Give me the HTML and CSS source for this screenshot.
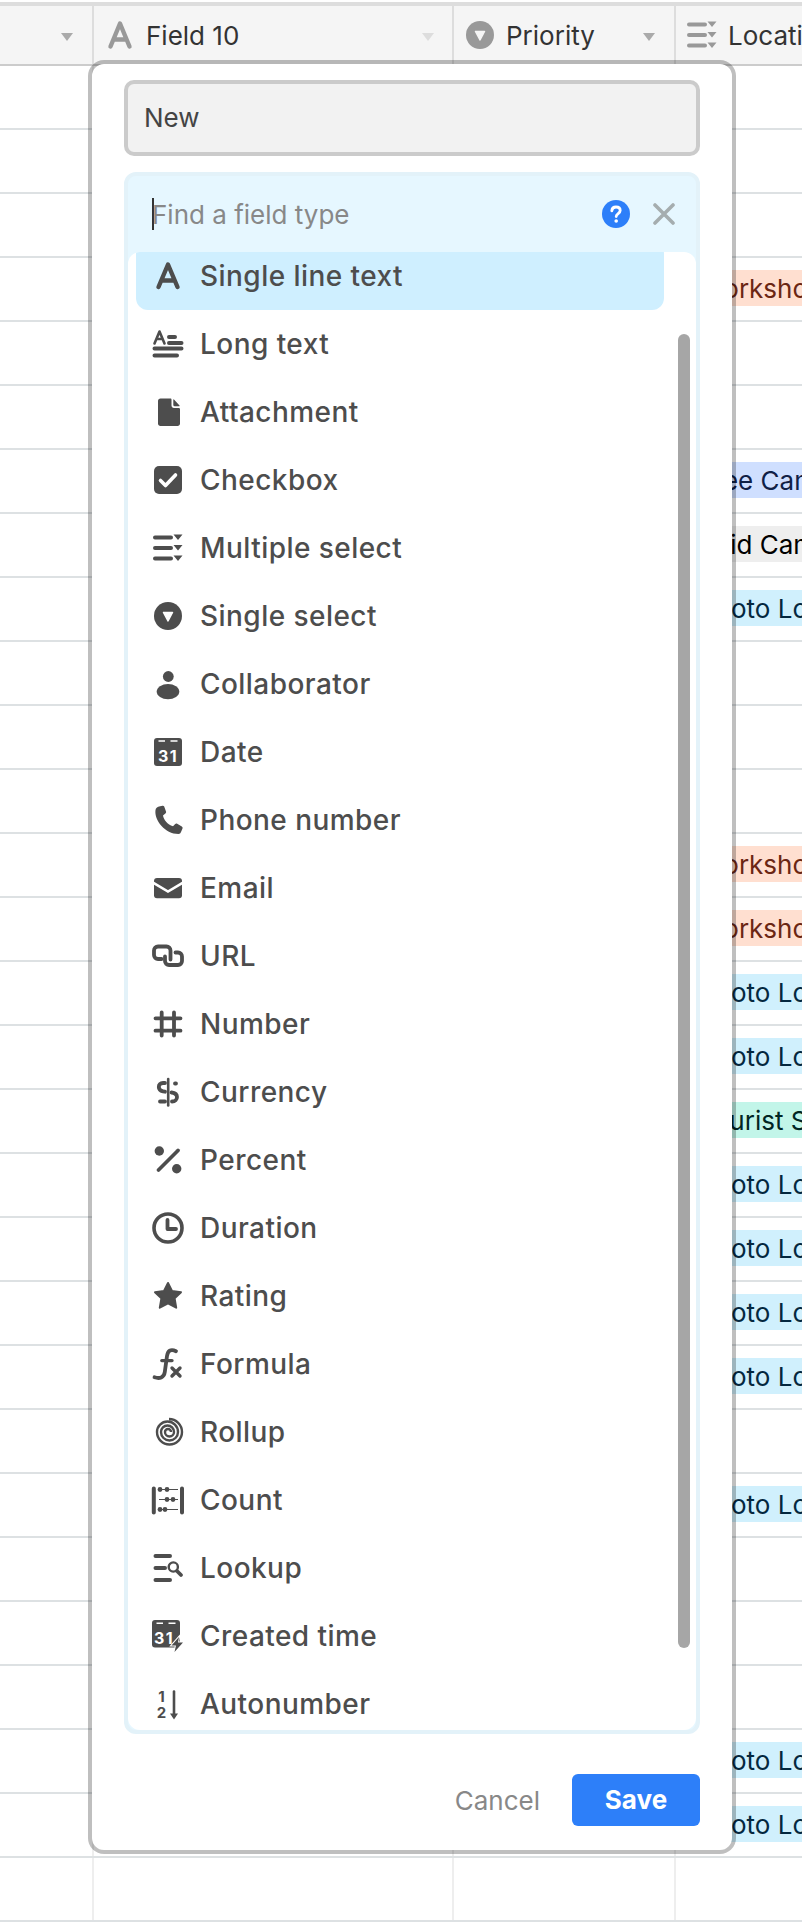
FILE: index.html
```html
<!DOCTYPE html>
<html lang="en">
<head>
<meta charset="utf-8">
<title>Field type picker</title>
<link rel="stylesheet" href="styles.css">
</head>
<body>
<div class="grid">
  <div class="head">
    <div class="hcell c0"><svg class="harrow" viewBox="0 0 14 10"><path d="M1 1H13L7 9Z" fill="#aaa"/></svg></div>
    <div class="hcell c1">
      <svg class="hico" viewBox="0 0 32 32"><path class="thick" d="M6.5 27.5 16 4.5 25.5 27.5M10 20.5H22"/></svg>
      <span class="hlabel">Field 10</span>
      <svg class="harrow" viewBox="0 0 14 10"><path d="M1 1H13L7 9Z" fill="#ddd"/></svg>
    </div>
    <div class="hcell c2">
      <svg class="hico" viewBox="0 0 32 32"><circle cx="16" cy="16" r="14" fill="#999"/><path d="M11.5 12.5H20.5L16 21Z" fill="#f5f5f5" stroke="#f5f5f5" stroke-width="1.5" stroke-linejoin="round"/></svg>
      <span class="hlabel">Priority</span>
      <svg class="harrow" viewBox="0 0 14 10"><path d="M1 1H13L7 9Z" fill="#aaa"/></svg>
    </div>
    <div class="hcell c3">
      <svg class="hico" viewBox="0 0 32 32"><path class="bars" d="M3 5.5H19M3 16H19M3 26.5H19"/><path class="solid" d="M21.5 2.5H30.5L26 8ZM21.5 13H30.5L26 18.5ZM21.5 23.5H30.5L26 29Z"/></svg>
      <span class="hlabel">Location</span>
    </div>
  </div>
  <div class="row"><div class="cell c0"></div><div class="cell c1"></div><div class="cell c2"></div><div class="cell c3"></div></div>
  <div class="row"><div class="cell c0"></div><div class="cell c1"></div><div class="cell c2"></div><div class="cell c3"></div></div>
  <div class="row"><div class="cell c0"></div><div class="cell c1"></div><div class="cell c2"></div><div class="cell c3"></div></div>
  <div class="row"><div class="cell c0"></div><div class="cell c1"></div><div class="cell c2"></div><div class="cell c3"><span class="tag shop">Workshop</span></div></div>
  <div class="row"><div class="cell c0"></div><div class="cell c1"></div><div class="cell c2"></div><div class="cell c3"></div></div>
  <div class="row"><div class="cell c0"></div><div class="cell c1"></div><div class="cell c2"></div><div class="cell c3"></div></div>
  <div class="row"><div class="cell c0"></div><div class="cell c1"></div><div class="cell c2"></div><div class="cell c3"><span class="tag free">Free Campsite</span></div></div>
  <div class="row"><div class="cell c0"></div><div class="cell c1"></div><div class="cell c2"></div><div class="cell c3"><span class="tag paid">Paid Campsite</span></div></div>
  <div class="row"><div class="cell c0"></div><div class="cell c1"></div><div class="cell c2"></div><div class="cell c3"><span class="tag photo">Photo Location</span></div></div>
  <div class="row"><div class="cell c0"></div><div class="cell c1"></div><div class="cell c2"></div><div class="cell c3"></div></div>
  <div class="row"><div class="cell c0"></div><div class="cell c1"></div><div class="cell c2"></div><div class="cell c3"></div></div>
  <div class="row"><div class="cell c0"></div><div class="cell c1"></div><div class="cell c2"></div><div class="cell c3"></div></div>
  <div class="row"><div class="cell c0"></div><div class="cell c1"></div><div class="cell c2"></div><div class="cell c3"><span class="tag shop">Workshop</span></div></div>
  <div class="row"><div class="cell c0"></div><div class="cell c1"></div><div class="cell c2"></div><div class="cell c3"><span class="tag shop">Workshop</span></div></div>
  <div class="row"><div class="cell c0"></div><div class="cell c1"></div><div class="cell c2"></div><div class="cell c3"><span class="tag photo">Photo Location</span></div></div>
  <div class="row"><div class="cell c0"></div><div class="cell c1"></div><div class="cell c2"></div><div class="cell c3"><span class="tag photo">Photo Location</span></div></div>
  <div class="row"><div class="cell c0"></div><div class="cell c1"></div><div class="cell c2"></div><div class="cell c3"><span class="tag tour">Tourist Spot</span></div></div>
  <div class="row"><div class="cell c0"></div><div class="cell c1"></div><div class="cell c2"></div><div class="cell c3"><span class="tag photo">Photo Location</span></div></div>
  <div class="row"><div class="cell c0"></div><div class="cell c1"></div><div class="cell c2"></div><div class="cell c3"><span class="tag photo">Photo Location</span></div></div>
  <div class="row"><div class="cell c0"></div><div class="cell c1"></div><div class="cell c2"></div><div class="cell c3"><span class="tag photo">Photo Location</span></div></div>
  <div class="row"><div class="cell c0"></div><div class="cell c1"></div><div class="cell c2"></div><div class="cell c3"><span class="tag photo">Photo Location</span></div></div>
  <div class="row"><div class="cell c0"></div><div class="cell c1"></div><div class="cell c2"></div><div class="cell c3"></div></div>
  <div class="row"><div class="cell c0"></div><div class="cell c1"></div><div class="cell c2"></div><div class="cell c3"><span class="tag photo">Photo Location</span></div></div>
  <div class="row"><div class="cell c0"></div><div class="cell c1"></div><div class="cell c2"></div><div class="cell c3"></div></div>
  <div class="row"><div class="cell c0"></div><div class="cell c1"></div><div class="cell c2"></div><div class="cell c3"></div></div>
  <div class="row"><div class="cell c0"></div><div class="cell c1"></div><div class="cell c2"></div><div class="cell c3"></div></div>
  <div class="row"><div class="cell c0"></div><div class="cell c1"></div><div class="cell c2"></div><div class="cell c3"><span class="tag photo">Photo Location</span></div></div>
  <div class="row"><div class="cell c0"></div><div class="cell c1"></div><div class="cell c2"></div><div class="cell c3"><span class="tag photo">Photo Location</span></div></div>
  <div class="row"><div class="cell c0"></div><div class="cell c1"></div><div class="cell c2"></div><div class="cell c3"></div></div>
</div>

<div class="modal">
  <div class="name">New</div>
  <div class="picker">
    <div class="search">
      <span class="caret"></span>
      <span class="placeholder">Find a field type</span>
      <svg class="help" viewBox="0 0 28 28"><circle cx="14" cy="14" r="14" fill="#2d7ff9"/><path d="M9.8 10.8C10 8.2 11.8 7 14 7C16.4 7 18.2 8.4 18.2 10.6C18.2 13.6 14.2 13.6 14.2 16.6" fill="none" stroke="#fff" stroke-width="2.8" stroke-linecap="round"/><circle cx="14.2" cy="21" r="1.8" fill="#fff"/></svg>
      <svg class="close" viewBox="0 0 22 22"><path d="M2 2 20 20M20 2 2 20" fill="none" stroke="#a5adaf" stroke-width="3.6" stroke-linecap="round"/></svg>
    </div>
    <div class="list">
      <div class="items">
        <div class="item active"><svg class="ico" viewBox="0 0 32 32"><path class="thick" d="M6.5 27 16 4.5 25.5 27M10 20.5H22"/></svg><span>Single line text</span></div>
        <div class="item"><svg class="ico" viewBox="0 0 32 32"><path class="thin" d="M2.5 15.5 7.5 3.5 12.5 15.5M4.5 11H10.5"/><path class="bars" d="M17 9H23M17 15H29.5M2.5 20.5H29.5M2.5 27.5H25"/></svg><span>Long text</span></div>
        <div class="item"><svg class="ico" viewBox="0 0 32 32"><path class="solid" d="M8.5 2.5H18.5C19.2 2.5 19.5 3 19.5 3.8V9.5C19.5 11 20.5 12 22 12H26.5C27.4 12 28 12.4 28 13.2V27.5C28 29 27 30 25.5 30H8.5C7 30 6 29 6 27.5V5C6 3.5 7 2.5 8.5 2.5ZM22 3.5 27.5 9.5C27.8 10 27.5 10.3 27 10.3H22.5C21.8 10.3 21.3 9.8 21.3 9.1V4C21.3 3.3 21.7 3.2 22 3.5Z"/></svg><span>Attachment</span></div>
        <div class="item"><svg class="ico" viewBox="0 0 32 32"><rect x="2" y="2" width="28" height="28" rx="5" class="solid"/><path class="cut" d="M8.5 16.5 13.5 21.5 23.5 11"/></svg><span>Checkbox</span></div>
        <div class="item"><svg class="ico" viewBox="0 0 32 32"><path class="bars" d="M3 5.5H19M3 16H19M3 26.5H19"/><path class="solid" d="M21.5 2.5H30.5L26 8ZM21.5 13H30.5L26 18.5ZM21.5 23.5H30.5L26 29Z"/></svg><span>Multiple select</span></div>
        <div class="item"><svg class="ico" viewBox="0 0 32 32"><circle cx="16" cy="16" r="14" class="solid"/><path d="M11.5 12.5H20.5L16 21Z" fill="#fff" stroke="#fff" stroke-width="1.5" stroke-linejoin="round"/></svg><span>Single select</span></div>
        <div class="item"><svg class="ico" viewBox="0 0 32 32"><circle cx="16.3" cy="8.5" r="5.4" class="solid"/><ellipse cx="16" cy="23.6" rx="11.3" ry="7.7" class="solid"/></svg><span>Collaborator</span></div>
        <div class="item"><svg class="ico" viewBox="0 0 32 32"><rect x="2" y="2" width="28" height="28" rx="3" class="solid"/><path class="dash" d="M6.5 5H13M18.5 5H25.5"/><text class="num" x="16" y="26">31</text></svg><span>Date</span></div>
        <div class="item"><svg class="ico" viewBox="0 0 32 32"><path class="solid" d="M7 2.5 10.5 1.7C11.3 1.5 11.9 1.9 12.2 2.6L14 7.5C14.3 8.3 14 9 13.4 9.5L11 11.5C11.5 15.5 15.5 20.5 21 22.3L23.2 20C23.8 19.4 24.5 19.3 25.2 19.7L29.8 22.5C30.5 23 30.8 23.7 30.5 24.4L29 28C28.6 29 27.8 30 26.5 30C13 30 2 16 3.5 6C3.7 4.3 5.3 3 7 2.5Z"/></svg><span>Phone number</span></div>
        <div class="item"><svg class="ico" viewBox="0 0 32 32"><rect x="2" y="6" width="28" height="20.3" rx="3" class="solid"/><path d="M1 10.6 16 19.5 31 10.6" fill="none" stroke="#fff" stroke-width="2.6"/></svg><span>Email</span></div>
        <div class="item"><svg class="ico" viewBox="0 0 32 32"><path class="link" d="M9.5 19H6A4 4 0 0 1 2 15V10.5A4 4 0 0 1 6 6.5H14.5A4 4 0 0 1 18.5 10.5V19.5"/><path class="link" d="M23.5 12.5H26A4 4 0 0 1 30 16.5V21A4 4 0 0 1 26 25H17A4 4 0 0 1 13 21V16.5"/></svg><span>URL</span></div>
        <div class="item"><svg class="ico" viewBox="0 0 32 32"><path class="link" d="M9.7 4.5V27.5M22 4.5V27.5M3.5 10.3H28.5M3.5 22.7H28.5"/></svg><span>Number</span></div>
        <div class="item"><svg class="ico" viewBox="0 0 32 32"><path class="link" d="M13 7H11C8.3 7 6.8 8.8 6.8 11C6.8 13.4 8.3 14.8 11 15.3L13 15.7M24 7.5H23M8 25.5H13M19.5 16.5C23 17 25 18.5 25 21C25 23.4 23.2 25.5 20 25.5"/><path class="thin" d="M16.2 3V29.5"/></svg><span>Currency</span></div>
        <div class="item"><svg class="ico" viewBox="0 0 32 32"><circle cx="7.3" cy="7" r="4.7" class="solid"/><circle cx="24.7" cy="24.7" r="4.7" class="solid"/><path class="link" d="M6.5 26 26 6.5"/></svg><span>Percent</span></div>
        <div class="item"><svg class="ico" viewBox="0 0 32 32"><circle cx="16" cy="16" r="14" class="ring"/><path class="link" d="M15.5 8V17H24"/></svg><span>Duration</span></div>
        <div class="item"><svg class="ico" viewBox="0 0 32 32"><path class="star" d="M16 3 20 10.9 29 12.2 22.6 18.4 24.2 27.7 16 23.4 7.8 27.7 9.4 18.4 3 12.2 12 10.9Z"/></svg><span>Rating</span></div>
        <div class="item"><svg class="ico" viewBox="0 0 32 32"><path class="link" d="M24 3.2C18.5 .5 15.8 3 15 8L12.8 24C12 29.8 7.5 31 2.5 29.3"/><path class="thin3" d="M9.8 12.6H20M20 20 28 28M28 20 20 28"/></svg><span>Formula</span></div>
        <div class="item"><svg class="ico" viewBox="0 0 32 32"><path class="spiral" d="M19 16A3 3 0 0 0 13 16A4.5 4.5 0 0 0 22 16A6.5 6.5 0 0 0 9 16A8.5 8.5 0 0 0 26 16A10.5 10.5 0 0 0 5 16A12.5 12.5 0 0 0 30 16A13 13 0 0 0 17 3"/></svg><span>Rollup</span></div>
        <div class="item"><svg class="ico" viewBox="0 0 32 32"><path class="bars" d="M1.8 4.5V28.5M30 4.5V28.5"/><path class="hair" d="M7 5.5H26M7 15.5H26M7 25.5H26"/><g class="solid"><circle cx="8" cy="5.5" r="2.4"/><circle cx="15" cy="5.5" r="2.4"/><circle cx="15" cy="15.5" r="2.4"/><circle cx="21" cy="15.5" r="2.4"/><circle cx="8" cy="25.5" r="2.4"/><circle cx="13" cy="25.5" r="2.4"/></g></svg><span>Count</span></div>
        <div class="item"><svg class="ico" viewBox="0 0 32 32"><path class="bars" d="M3.5 4H18M3.5 16H13M3.5 28H18"/><circle cx="21.3" cy="15" r="4.6" class="ringthin"/><path class="link" d="M25 19 29 23"/></svg><span>Lookup</span></div>
        <div class="item"><svg class="ico" viewBox="0 0 32 32"><rect x="0" y="0" width="28" height="27.5" rx="3" class="solid"/><path class="dash" d="M4.5 3.2H11M16.5 3.2H23.5"/><text class="num" x="12" y="24">31</text><path d="M27 17 19.5 25.5H24L22.5 32 31 22.5H26Z" class="solid bolt"/></svg><span>Created time</span></div>
        <div class="item"><svg class="ico" viewBox="0 0 32 32"><text class="mini" x="9.5" y="13.8">1</text><text class="mini" x="9.5" y="30.3">2</text><path class="thin" d="M22 3.5V28"/><path class="solid" d="M18 25.5H26L22 31.5Z"/></svg><span>Autonumber</span></div>
      </div>
      <div class="scrollbar"></div>
    </div>
  </div>
  <div class="footer">
    <span class="cancel">Cancel</span>
    <span class="save">Save</span>
  </div>
</div>
</body>
</html>
```
FILE: styles.css
```css
* { box-sizing: border-box; }
html, body { margin: 0; padding: 0; }
body {
  width: 802px;
  height: 1922px;
  overflow: hidden;
  position: relative;
  background: #fff;
  font-family: Inter, "Noto Sans", sans-serif;
  font-size: 26px;
}
.grid { padding-top: 2px; }
.head {
  display: flex;
  height: 64px;
  background: #f5f5f5;
  border-top: 4px solid #ddd;
  border-bottom: 2px solid #ccc;
}
.hcell { display: flex; align-items: center; border-right: 2px solid #ddd; height: 100%; white-space: nowrap; overflow: hidden; }
.c0 { width: 94px; flex: none; }
.c1 { width: 360px; flex: none; }
.c2 { width: 222px; flex: none; }
.c3 { flex: 1; min-width: 0; }
.hcell.c0 { justify-content: flex-end; padding-right: 18px; }
.hcell.c1 { padding-left: 10px; padding-right: 17px; }
.hcell.c2 { padding-left: 10px; padding-right: 18px; }
.hcell.c3 { border-right: 0; padding-left: 10px; }
.hico { width: 32px; height: 32px; flex: none; color: #999; margin-right: 10px; }
.hlabel { color: #333; flex: 1; }
.harrow { width: 14px; height: 10px; flex: none; margin-top: 4px; }

.row { display: flex; height: 64px; border-bottom: 2px solid #dde1e3; }
.cell { border-right: 2px solid #eee; height: 100%; overflow: hidden; white-space: nowrap; }
.cell.c3 { border-right: 0; padding: 12px 0 0 13px; }
.tag { display: inline-block; height: 36px; line-height: 38px; padding: 0 10px; border-radius: 18px; vertical-align: top; }
.shop { background: #ffdfd0; color: #6b2613; }
.free { background: #cfdfff; color: #102046; }
.paid { background: #eee; color: #000; }
.photo { background: #d0f0fd; color: #04283f; }
.tour { background: #c2f5e9; color: #012524; }

.modal {
  position: absolute;
  left: 88px;
  top: 60px;
  width: 648px;
  height: 1794px;
  display: flex;
  flex-direction: column;
  padding: 16px 32px 24px 32px;
  background: #fff;
  background-clip: padding-box;
  border: 4px solid rgba(0,0,0,.25);
  border-radius: 16px;
  color: #4d4d4d;
}
.name {
  flex: none;
  height: 76px;
  padding-left: 16px;
  line-height: 68px;
  background: #f2f2f2;
  border: 4px solid #cbcbcb;
  border-radius: 10px;
  color: #444;
}
.picker {
  flex: 1;
  min-height: 0;
  margin-top: 16px;
  display: flex;
  flex-direction: column;
  background: #e6f7ff;
  border: 4px solid #e3f2f9;
  border-radius: 12px;
}
.search { flex: none; height: 76px; display: flex; align-items: center; padding: 0 21px 0 24px; }
.caret { width: 2px; height: 32px; background: #333; flex: none; margin-right: -2px; }
.placeholder { flex: 1; color: #888; }
.help { width: 28px; height: 28px; flex: none; margin-right: 23px; }
.close { width: 22px; height: 22px; flex: none; }
.list { flex: 1; min-height: 0; position: relative; overflow: hidden; background: #fff; border-radius: 12px; }
.items { margin-top: -10px; }
.item { display: flex; align-items: center; height: 68px; padding-left: 24px; font-size: 28px; letter-spacing: .45px; font-weight: 500; color: #4d4d4d; white-space: nowrap; }
.item.active { margin: 0 32px 0 8px; padding-left: 16px; background: #cfefff; border-radius: 12px; }
.ico { width: 32px; height: 32px; flex: none; margin-right: 16px; overflow: visible; color: #4d4d4d; }
.scrollbar { position: absolute; left: 550px; top: 82px; width: 12px; height: 1314px; background: #a6a6a6; border-radius: 6px; }

.thick { fill: none; stroke: currentColor; stroke-width: 4.4; stroke-linecap: round; stroke-linejoin: round; }
.thin { fill: none; stroke: currentColor; stroke-width: 2.6; stroke-linecap: round; stroke-linejoin: round; }
.thin3 { fill: none; stroke: currentColor; stroke-width: 3.4; stroke-linecap: round; }
.bars { fill: none; stroke: currentColor; stroke-width: 4; stroke-linecap: round; }
.link { fill: none; stroke: currentColor; stroke-width: 3.8; stroke-linecap: round; stroke-linejoin: round; }
.solid { fill: currentColor; }
.cut { fill: none; stroke: #fff; stroke-width: 3.6; stroke-linecap: round; stroke-linejoin: round; }
.dash { fill: none; stroke: #fff; stroke-width: 1.6; }
.num { fill: #fff; font-size: 16px; font-weight: 700; text-anchor: middle; letter-spacing: 1.5px; }
.mini { fill: currentColor; font-size: 15px; font-weight: 700; text-anchor: middle; letter-spacing: 0; }
.ring { fill: none; stroke: currentColor; stroke-width: 3.6; }
.ringthin { fill: none; stroke: currentColor; stroke-width: 2.4; }
.star { fill: currentColor; stroke: currentColor; stroke-width: 2; stroke-linejoin: round; }
.spiral { fill: none; stroke: currentColor; stroke-width: 2.4; }
.hair { fill: none; stroke: currentColor; stroke-width: 1.2; }
.bolt { stroke: #fff; stroke-width: 2; paint-order: stroke; }

.footer { flex: none; height: 52px; margin-top: 40px; display: flex; justify-content: flex-end; align-items: center; }
.cancel { color: #888; margin-right: 32px; }
.save { width: 128px; height: 52px; line-height: 52px; text-align: center; color: #fff; font-weight: 700; background: #2d7ff9; border-radius: 6px; }
```
